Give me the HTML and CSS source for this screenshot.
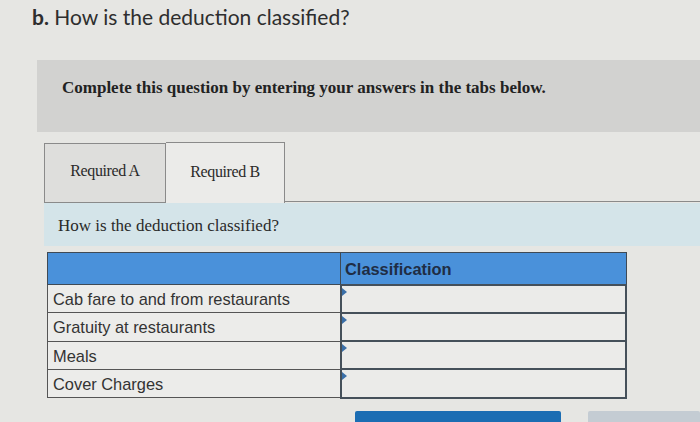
FILE: index.html
```html
<!DOCTYPE html>
<html>
<head>
<meta charset="utf-8">
<link rel="stylesheet" href="styles.css">
</head>
<body>
<div class="page">
  <h1 class="title"><b>b.</b> How is the deduction classified?</h1>
  <div class="instructions">Complete this question by entering your answers in the tabs below.</div>
  <div class="tabs">
    <div class="tab tab-a">Required A</div>
    <div class="tab tab-b">Required B</div>
    <div class="tab-rest"></div>
  </div>
  <div class="panel">How is the deduction classified?</div>
  <table class="grid">
    <thead>
      <tr><th class="c1"></th><th class="c2">Classification</th></tr>
    </thead>
    <tbody>
      <tr><td class="c1">Cab fare to and from restaurants</td><td class="c2"><span class="flag"></span></td></tr>
      <tr><td class="c1">Gratuity at restaurants</td><td class="c2"><span class="flag"></span></td></tr>
      <tr><td class="c1">Meals</td><td class="c2"><span class="flag"></span></td></tr>
      <tr><td class="c1">Cover Charges</td><td class="c2"><span class="flag"></span></td></tr>
    </tbody>
  </table>
  <div class="buttons">
    <div class="btn btn-prev"></div>
    <div class="btn btn-next"></div>
  </div>
</div>
</body>
</html>
```
FILE: styles.css
```css
html, body {
  margin: 0;
  padding: 0;
}
body {
  background: #e6e6e3;
  width: 700px;
  height: 422px;
  overflow: hidden;
}
.page {
  position: relative;
  height: 422px;
}
.title {
  margin: 0;
  padding: 4px 0 0 32px;
  font-family: "Lato", "Liberation Sans", sans-serif;
  font-weight: 400;
  font-size: 21px;
  line-height: 26px;
  color: #2e2e2e;
}
.title b {
  font-weight: 700;
}
.instructions {
  margin: 30px 0 0 37px;
  height: 72px;
  box-sizing: border-box;
  padding: 18px 0 0 25px;
  background: #d2d2d0;
  font-family: "Liberation Serif", serif;
  font-weight: 700;
  font-size: 17px;
  line-height: 20px;
  color: #222;
}
.tabs {
  display: flex;
  align-items: flex-end;
  margin: 10px 0 0 44px;
  height: 61px;
}
.tab {
  box-sizing: border-box;
  font-family: "Liberation Serif", serif;
  font-size: 16px;
  color: #2a2a2a;
  letter-spacing: -0.4px;
  display: flex;
  align-items: center;
  justify-content: center;
}
.tab-a {
  width: 122px;
  height: 60px;
  background: #dededc;
  border: 1px solid #8a8a8a;
  padding-bottom: 4px;
}
.tab-b {
  width: 119px;
  height: 61px;
  background: #ebebe9;
  border: 1px solid #8a8a8a;
  border-bottom: none;
  border-left: none;
  padding-bottom: 2px;
}
.tab-rest {
  flex: 1;
  height: 2px;
  border-bottom: 1px solid #8a8a8a;
  margin-bottom: 1px;
}
.panel {
  margin-left: 44px;
  height: 43px;
  box-sizing: border-box;
  padding: 14px 0 0 14px;
  background: #d4e4e9;
  font-family: "Liberation Serif", serif;
  font-size: 17px;
  line-height: 18px;
  color: #2a2a2a;
}
.grid {
  margin: 6px 0 0 47px;
  border-collapse: collapse;
  width: 580px;
  font-family: "Liberation Sans", sans-serif;
  font-size: 16.4px;
  color: #333;
}
.grid th {
  height: 32px;
  box-sizing: border-box;
  background: #4a91da;
  border: 1px solid #3f4a55;
  text-align: left;
  padding: 0 4px;
  font-weight: 700;
  color: #1f2d44;
  vertical-align: top;
  padding-top: 7px;
}
.grid th.c1 {
  width: 293px;
  border-right: 1px solid #3f4a55;
}
.grid td {
  height: 28.3px;
  box-sizing: border-box;
  padding: 0 5px;
  border: 1px solid #555;
}
.grid td.c1 {
  background: #ececea;
  padding-top: 2px;
}
.grid td.c2 {
  border: 2px solid #45505a;
  background: #ebebe9;
  vertical-align: top;
  padding: 0;
  position: relative;
}
.flag {
  position: absolute;
  left: 0;
  top: 2px;
  width: 0;
  height: 0;
  border-top: 4px solid transparent;
  border-bottom: 4px solid transparent;
  border-left: 5px solid #3a6fa8;
}
.buttons {
  display: flex;
  margin: 12px 0 0 355px;
  gap: 27px;
}
.btn {
  height: 14px;
  border-radius: 2px 2px 0 0;
}
.btn-prev {
  width: 206px;
  background: #1b6db3;
}
.btn-next {
  width: 112px;
  background: #c4ccd3;
}
```
